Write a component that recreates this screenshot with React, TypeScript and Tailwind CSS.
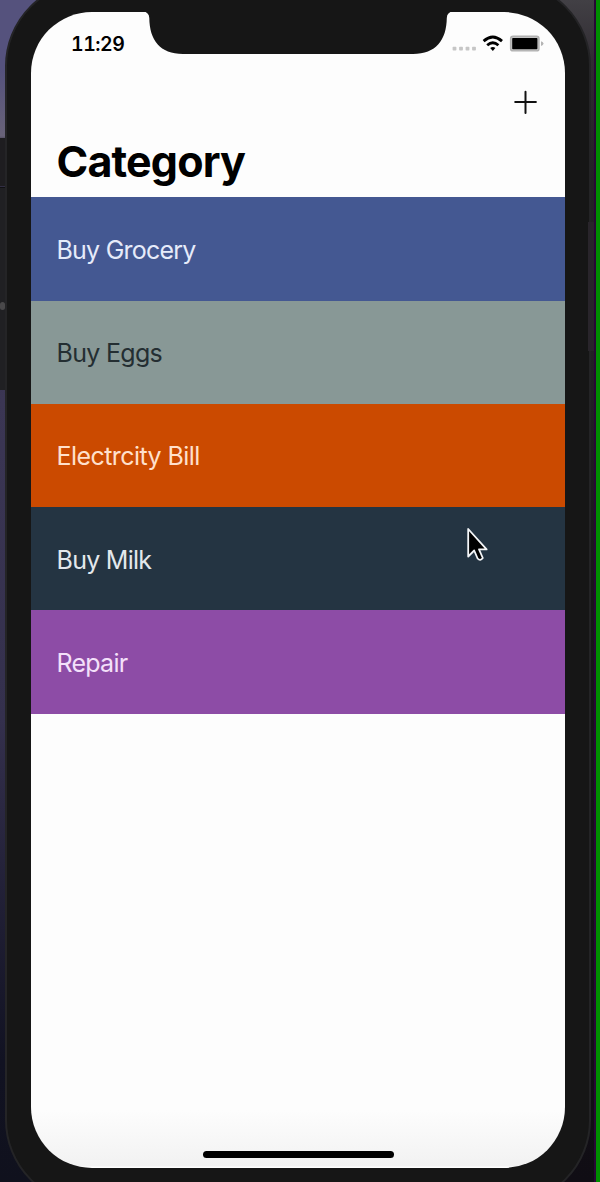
const rows = [
  { name: "Buy Grocery", style: "bg-[#445892] text-[#e6ebfa]", spacing: "tracking-[-0.77px]" },
  { name: "Buy Eggs", style: "bg-[#889896] text-[#242e32]", spacing: "tracking-[-0.7px]" },
  { name: "Electrcity Bill", style: "bg-[#cb4a00] text-[#ffe0cc]", spacing: "tracking-[-0.56px]" },
  { name: "Buy Milk", style: "bg-[#243442] text-[#e3e8ec]", spacing: "tracking-[-0.72px]" },
  { name: "Repair", style: "bg-[#8d4ca6] text-[#f4e0fa]", spacing: "tracking-[-0.75px]" },
];

function StatusIcons() {
  return (
    <svg className="h-[24px] w-[96px]" viewBox="450 32 96 24" aria-hidden="true">
      <g fill="#c6c6c6">
        <rect x="452.6" y="46.7" width="3.8" height="3.8" rx="0.8" />
        <rect x="459.1" y="46.7" width="3.8" height="3.8" rx="0.8" />
        <rect x="465.6" y="46.7" width="3.8" height="3.8" rx="0.8" />
        <rect x="472.1" y="46.7" width="3.8" height="3.8" rx="0.8" />
      </g>
      <g fill="none" stroke="#000" strokeWidth="2.8">
        <path d="M483.6 41.1 Q492.8 32.8 502 41.1" />
        <path d="M487.2 45.3 Q492.8 40.2 498.4 45.3" />
      </g>
      <path d="M490.2 48 Q492.8 45.9 495.4 48 L492.8 51 Z" fill="#000" />
      <rect x="510.6" y="36.3" width="28.4" height="14.6" rx="2.5" fill="#c4c4c4" stroke="#b1b1b1" strokeWidth="1.4" />
      <rect x="512.2" y="38" width="25.2" height="11.3" rx="0.8" fill="#000" />
      <path d="M541 41.2 q2.5 .6 2.5 2.4 t-2.5 2.4 Z" fill="#b5b5b5" />
    </svg>
  );
}

export default function App() {
  return (
    <div className="relative flex h-[1182px] w-[600px] overflow-hidden bg-[#17161d] font-['Inter',sans-serif]">
      <div className="h-full w-[300px] bg-[linear-gradient(#55527d_0px,#55527d_70px,#686278_136px,#302d40_142px,#3b3654_400px,#34304d_720px,#25233b_860px,#111222_1060px,#10111d_1182px)]" />
      <div className="h-full flex-1 bg-[linear-gradient(#424045_0px,#302c32_60px,#242126_180px,#222025_400px,#181519_600px,#100d14_1182px)]" />
      <div className="w-[2px] bg-[#280835]" />
      <div className="w-[4px] bg-[#008e00]" />

      <div className="absolute left-0 top-[138px] h-[48px] w-[8px] bg-[#1e1d20]" />
      <div className="absolute left-0 top-[187px] h-[203px] w-[8px] border-t border-[#101014] bg-[#202023]" />
      <div className="absolute left-0 top-[302px] h-[8px] w-[5px] rounded-full bg-[#49484a]" />

      <div className="absolute left-[5px] top-[-19px] flex h-[1224px] w-[586px] rounded-[85px] border-2 border-[#242426] bg-[#161616] px-[24px] pb-[35px] pt-[29px]">
        <main className="flex h-[1156px] w-full flex-col overflow-hidden rounded-[61px] bg-[linear-gradient(#fdfdfd_0px,#fdfdfd_1098px,#f2f2f2_1154px,#fff_1155px)]">
          <div className="flex h-[64px] shrink-0 items-start justify-between pl-[40px] pr-[19px] pt-[20px]">
            <time className="text-[19.5px] font-semibold tabular-nums leading-[24px] tracking-[-0.45px] text-black">11:29</time>
            <StatusIcons />
          </div>
          <div className="flex h-[52px] shrink-0 justify-end pr-[27px] pt-[13px]">
            <button aria-label="Add" className="h-[26px] w-[26px]">
              <svg viewBox="0 0 26 26" className="h-[26px] w-[26px]" stroke="#111" strokeWidth="2" strokeLinecap="round">
                <path d="M13.5 2.7v21.2M3.2 13.1h20.7" />
              </svg>
            </button>
          </div>
          <h1 className="h-[69.4px] shrink-0 pl-[25.5px] pt-[7px] text-[43px] font-bold leading-[52px] tracking-[-0.85px] text-black">Category</h1>
          <ul>
            {rows.map((r) => (
              <li key={r.name} className={`flex h-[103.25px] items-center pl-[25.5px] pt-[3px] text-[25px] ${r.spacing} ${r.style}`}>
                {r.name}
              </li>
            ))}
          </ul>
          <div className="mx-auto mb-[10px] mt-auto h-[7px] w-[191px] shrink-0 rounded-full bg-black" />
        </main>
      </div>
      <div className="absolute left-[588px] top-[222px] h-[129px] w-[6px] bg-[#29252b]" />

      <svg className="absolute left-[143px] top-[9px] h-[46px] w-[310px]" viewBox="143 9 310 46" aria-hidden="true">
        <path d="M143 9 V11.5 Q149 12 149.3 18 C149.5 40 160 54 183 54 H413 C436 54 446.5 40 446.8 18 Q447 12 453 11.5 V9 Z" fill="#161616" />
      </svg>
      <svg className="absolute left-[465px] top-[525px] h-[38px] w-[25px]" viewBox="0 0 25 38" aria-hidden="true">
        <path d="M3.2 4v27.5l6-6 3.4 8q2.7 3 5.2-.5l-3.8-8.6h7.6Z" fill="#000" stroke="#f4f6f8" strokeWidth="1.8" strokeLinejoin="round" />
      </svg>
    </div>
  );
}
